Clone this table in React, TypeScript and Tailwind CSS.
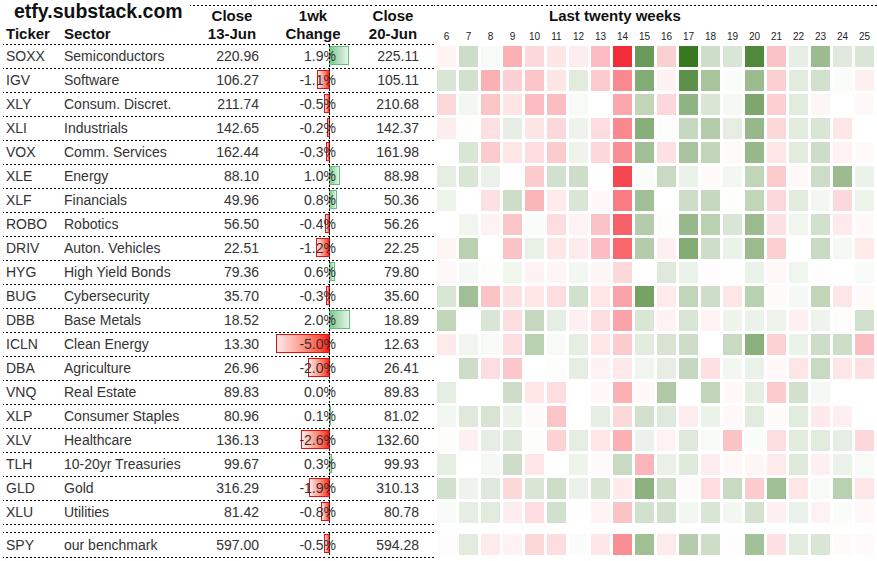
type Row = [string, string, string, number, string, number[]];

const rows: Row[] = [
  ["SOXX", "Semiconductors", "220.96", 1.9, "225.11", [-0.5, 2, 0.3, -3, -1.5, -1, -0.7, -2.5, -8, 6, -1.8, 8, 2, 1.5, 7, -2.3, 1, 4, 1.3, 1.5]],
  ["IGV", "Software", "106.27", -1.1, "105.11", [1.5, 1.8, -3, -1.8, -2.2, -1, 1.2, -2, -4.5, 5, -0.5, 6.5, 3.5, 0.2, 4, -1.8, 1.2, 1.8, 0.2, -0.6]],
  ["XLY", "Consum. Discret.", "211.74", -0.5, "210.68", [-1.5, 0.5, -2.2, -1, -2.5, -2.5, 0.3, 0, -3.3, 2.5, -1.5, 4.5, 1.5, 0.4, 5.2, -1.8, 1.2, -0.4, 0, -0.3]],
  ["XLI", "Industrials", "142.65", -0.2, "142.37", [-0.7, 0.1, -1.2, 1, -1, -1.5, 0.7, -1.3, -4.5, 4.8, 0.1, 2.3, 3, 1, 4.2, -1.5, 1.2, 1.5, -1, 0]],
  ["VOX", "Comm. Services", "162.44", -0.3, "161.98", [0, 1.5, -2, -1, -1.3, -2, 0.7, -1.5, -4.3, 3.8, -1.2, 3.5, 2.5, -0.2, 4.2, -1, 1.2, 2, -0.5, -0.2]],
  ["XLE", "Energy", "88.10", 1.0, "88.98", [1, 1.5, 0.8, 0, -2, 1.8, 2, 0, -7, 0.2, 2.2, 0.8, -0.2, 0.5, 2.5, -2, -0.3, 2, 4, 0.8]],
  ["XLF", "Financials", "49.96", 0.8, "50.36", [0.7, 0, -1.2, 2, -2.8, -0.8, 1.5, -0.3, -5, 3.8, 0, 2, 2.3, 0.1, 2.5, -1.5, 1.2, 0.5, -1.5, 0.7]],
  ["ROBO", "Robotics", "56.50", -0.4, "56.26", [0, 0.6, -0.5, -2.2, 0.2, -1.3, -0.5, -2.3, -6, 3, 0.1, 4.2, 2.8, 1.5, 4, -1.2, 0.6, 1.8, -0.8, -0.3]],
  ["DRIV", "Auton. Vehicles", "22.51", -1.2, "22.25", [-0.4, 2.8, 0, -2.3, 0.9, -1, -0.8, -2.5, -5.8, 3, -0.6, 5, 2, 0.8, 4, -1.8, 0, 2.2, 0.4, -0.8]],
  ["HYG", "High Yield Bonds", "79.36", 0.6, "79.80", [-0.3, 0.4, 0.1, 0.6, -0.5, -0.4, 0.5, -0.4, -1.5, 0, 1.3, 0.8, -0.1, 0, 0.8, -0.3, 0.6, -0.1, 0, 0.3]],
  ["BUG", "Cybersecurity", "35.70", -0.3, "35.60", [1.5, 3.8, -2.3, -1.2, -1, -1.3, 1.8, -1, -3.5, 5.5, -0.8, 2.5, 2, -1, 2.8, -0.2, 0.4, 2.5, -1, -0.2]],
  ["DBB", "Base Metals", "18.52", 2.0, "18.89", [2.5, 0, 1.5, -1.3, 2.3, 1, -0.6, -1.3, -3.5, 1.5, -0.5, 1.5, -0.5, 0.7, 0.8, 0.7, -0.6, 0.7, 0.1, 1.8]],
  ["ICLN", "Clean Energy", "13.30", -5.0, "12.63", [-0.8, 0.6, 0.3, -1.3, 2.8, 0.3, 1, -1, -2, 1.2, 1.6, 2, 0, 2.2, 4.7, -1.7, 0.8, 2, 2, -2.5]],
  ["DBA", "Agriculture", "26.96", -2.0, "26.41", [0, 2, -1.3, -2.1, 0, 0.1, 1, -0.5, -0.8, 0.6, 1, 2.3, -1.2, 0.5, 0.8, -0.3, -1, 2.2, -1, -1.2]],
  ["VNQ", "Real Estate", "89.83", 0.0, "89.83", [1, 0, 0, 2, -1, -1.3, 0, -0.3, -3, -0.3, 3.2, 0, 2.5, -0.3, 1, -2, 1.8, 0.4, 0, 0]],
  ["XLP", "Consumer Staples", "80.96", 0.1, "81.02", [0.5, 1.3, 1.6, 0.8, -0.2, -2.2, 0, 1, -1.5, 1.8, 1.3, -0.7, 0.8, -0.3, 1.2, -0.2, 1.2, -0.8, -0.6, 0]],
  ["XLV", "Healthcare", "136.13", -2.6, "132.60", [0.1, -0.6, 1, 1.3, 0.1, -1.7, 1, -1, -3, 0.8, -0.5, 1.3, 0.3, -2.3, 0.2, -1.3, 1.2, 1.2, 1, -1.5]],
  ["TLH", "10-20yr Treasuries", "99.67", 0.3, "99.93", [1, 0, 0.4, 2, -1, 0, 0.7, -0.2, 2.2, -2.8, 0.9, 1.3, -0.7, -0.3, -0.4, -0.8, 1.3, -0.6, 0.8, 0.3]],
  ["GLD", "Gold", "316.29", -1.9, "310.13", [1.8, 0.7, 1.3, -1.5, 1.5, 2, 0.8, 1.5, -0.8, 4.6, 2, -0.2, -1.3, 2.2, -2, 3.8, -1, 0.3, 2.8, -1]],
  ["XLU", "Utilities", "81.42", -0.8, "80.78", [0.3, 1, 1.2, -0.7, -1.3, 1.8, 0, -0.5, -2.3, 1.8, 1.8, 0.5, 1.5, 0.5, 1.7, -0.6, 0.8, -0.5, 0.2, -0.3]],
];

const spy: Row = ["SPY", "our benchmark", "597.00", -0.5, "594.28", [-0.1, 1.2, -0.8, -0.5, -1.5, -1.3, 0.2, -0.9, -4.3, 3.8, -0.8, 3, 2, -0.1, 3.7, -1.2, 1.2, 1.5, -0.2, -0.2]];

const weeks = Array.from({ length: 20 }, (_, i) => i + 6);

// 2px on / 2px off dotted rule, like the spreadsheet export
const dotsH = "[border-image:repeating-linear-gradient(90deg,#000_0_2px,transparent_2px_4px)_1]";

function heat(v: number) {
  const t = Math.min(Math.abs(v) / 8, 1);
  const end = v >= 0 ? [56, 120, 32] : [243, 45, 55];
  const [r, g, b] = end.map((c) => Math.round(255 + (c - 255) * t));
  return `rgb(${r},${g},${b})`;
}

function ChangeCell({ v }: { v: number }) {
  const w = Math.abs(v) * 10.6;
  return (
    <div className="relative h-full w-[77px]">
      {v < 0 && (
        <div
          className="absolute top-[1px] h-[19px] border border-[#e31010] bg-linear-to-l from-[#ff0000] to-[#ffeaea]"
          style={{ left: 70 - w, width: w + 1 }}
        />
      )}
      {v > 0 && (
        <div
          className="absolute top-[1px] left-[70px] h-[19px] border border-[#63be7b] bg-linear-to-r from-[#7cc98e] to-[#e6f5e9]"
          style={{ width: w }}
        />
      )}
      <div className="absolute top-0 -bottom-[1px] left-[70px] w-px bg-[repeating-linear-gradient(180deg,#000_0_2px,transparent_2px_4px)]" />
      <div className="relative flex h-full items-center justify-end">{v.toFixed(1)}%</div>
    </div>
  );
}

function DataRow({ r, top }: { r: Row; top?: boolean }) {
  const [tk, sector, c1, ch, c2, heatVals] = r;
  return (
    <div className="flex">
      <div
        className={`flex w-[431px] items-center border-b border-solid ${dotsH} text-[14px] text-[#333] ${top ? "h-[26px] border-t" : "h-[24px]"}`}
      >
        <div className="w-[61px] pl-[3px]">{tk}</div>
        <div className="w-[140px]">{sector}</div>
        <div className="w-[55px] text-right">{c1}</div>
        <ChangeCell v={ch} />
        <div className="w-[83px] text-right">{c2}</div>
      </div>
      <div className={`flex gap-[3px] pl-[3px] ${top ? "pt-[2px]" : "pt-[1px]"}`}>
        {heatVals.map((v, i) => (
          <div key={i} className="h-[21px] w-[19px]" style={{ background: heat(v) }} />
        ))}
      </div>
    </div>
  );
}

export default function App() {
  return (
    <div className="h-[561px] w-[877px] overflow-hidden bg-white pl-[3px] font-['Liberation_Sans',Arial,sans-serif] text-[#111]">
      {/* header */}
      <div className="flex">
        <div className={`w-[431px] border-b border-solid ${dotsH}`}>
          <div className="flex h-[25px]">
            <div className="w-[187px] pl-[11px] text-[19.5px] leading-[22px] font-bold">etfy.substack.com</div>
            <div className={`mt-[5px] flex flex-1 border-t border-solid ${dotsH} pt-[1px] text-[15px] leading-[17px] font-bold`}>
              <div className="w-[10px]" />
              <div className="w-[64px] text-center">Close</div>
              <div className="w-[98px] text-center">1wk</div>
              <div className="w-[62px] text-center">Close</div>
            </div>
          </div>
          <div className="flex h-[19px] text-[15px] leading-[17px] font-bold">
            <div className="w-[61px] pl-[3px]">Ticker</div>
            <div className="w-[136px]">Sector</div>
            <div className="w-[64px] text-center">13-Jun</div>
            <div className="w-[98px] text-center">Change</div>
            <div className="w-[62px] text-center">20-Jun</div>
          </div>
        </div>
        <div className={`mt-[5px] flex-1 border-t border-solid ${dotsH}`}>
          <div className="pt-[1px] pl-[115px] text-[15px] leading-[17px] font-bold">Last twenty weeks</div>
          <div className="mt-[7px] flex gap-[3px] pl-[3px] text-[10px] leading-[12px] text-[#222]">
            {weeks.map((w) => (
              <div key={w} className="w-[19px] text-center">
                {w}
              </div>
            ))}
          </div>
        </div>
      </div>

      {rows.map((r) => (
        <DataRow key={r[0]} r={r} />
      ))}
      <div className="h-[7px]" />
      <DataRow r={spy} top />
    </div>
  );
}
